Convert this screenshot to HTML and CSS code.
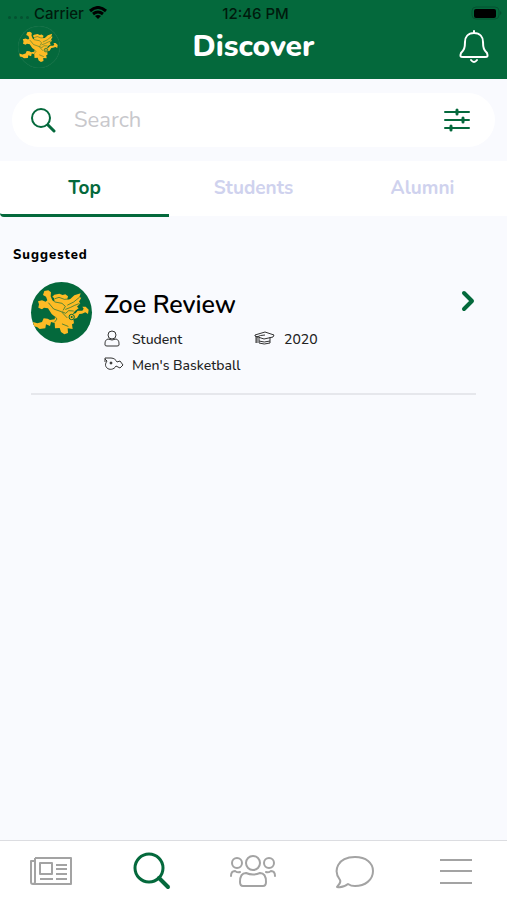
FILE: index.html
```html
<!DOCTYPE html>
<html lang="en">
<head>
    <meta charset="UTF-8">
    <meta name="viewport" content="width=device-width, initial-scale=1.0">
    <title>Discover</title>
    <link rel="stylesheet" href="styles.css">
</head>
<body>
    <!-- shared artwork -->
    <svg class="defs" aria-hidden="true">
        <symbol id="gryphon" viewBox="20 12 183 183">
            <path fill="#fdbb25" d="M60 39L72 37L80 43L79 55L84 67L91 72L89 60L84 56L90 50L105 47L115 51L123 49L131 55L129 64L137 64L150 52L169 46L165 58L171 59L164 71L168 76L158 86L163 91L152 99L145 108L154 106L160 98L174 98L178 92L174 86L184 86L193 95L191 108L183 103L173 107L165 108L158 120L147 123L149 136L143 139L145 153L130 151L131 165L120 169L110 162L106 150L92 151L91 135L80 132L77 144L65 139L63 151L46 153L38 147L28 145L26 132L39 136L53 132L58 121L70 122L77 126L91 124L92 116L82 108L71 91L59 89L53 94L42 89L44 79L41 70L53 67L64 71L69 67L65 56L56 51Z"/>
            <path fill="none" stroke="#04693c" stroke-width="2" stroke-linecap="round" stroke-linejoin="round" d="M73 75L88 93L111 101L128 119M92 72L113 76L123 85L117 96M92 62L104 58L120 64L133 63M130 81L148 72L164 59M124 94L139 88L151 82L164 77M113 101L124 106L133 98L147 99M92 116L98 123L91 132M114 138L131 145"/>
            <circle cx="142" cy="117" r="8" fill="#fdbb25" stroke="#04693c" stroke-width="3"/>
            <circle cx="142" cy="117" r="3" fill="#04693c"/>
        </symbol>
    </svg>

    <header>
        <div class="status-bar">
            <div class="carrier">
                <span class="signal"><i></i><i></i><i></i><i></i></span>
                <span>Carrier</span>
                <svg width="18" height="14" viewBox="0 0 18 14" fill="none" stroke="#000" stroke-width="3">
                    <path d="M1 5Q9-2 17 5M4 8Q9 4 14 8"/>
                    <path d="M6 10Q9 8 12 10L9 13Z" fill="#000" stroke="none"/>
                </svg>
            </div>
            <span class="time">12:46 PM</span>
            <svg class="battery" width="32" height="14" viewBox="0 0 32 14">
                <rect x="1" y="1" width="27" height="12" rx="4" fill="none" stroke="#045231"/>
                <rect x="3" y="3" width="22" height="9" rx="2"/>
                <path d="M29 5Q32 7 29 9Z" fill="#045231"/>
            </svg>
        </div>
        <div class="title-bar">
            <a href="#" class="logo" aria-label="Profile"><svg width="42" height="42"><use href="#gryphon"/></svg></a>
            <h1>Discover</h1>
            <button class="bell" aria-label="Notifications">
                <svg width="30" height="34" viewBox="0 0 30 34" fill="none" stroke="#fff" stroke-width="2" stroke-linecap="round" stroke-linejoin="round">
                    <path d="M15 3V1M15 3C9 3 6 7 6 12C6 18 5 20 2 23C1 26 1 27 4 27H26C29 27 29 26 28 23C25 20 24 18 24 12C24 7 21 3 15 3ZM12 30Q15 34 18 30"/>
                </svg>
            </button>
        </div>
    </header>

    <main>
        <form class="search">
            <label for="search" aria-label="Search">
                <svg width="26" height="26" viewBox="0 0 26 26" fill="none" stroke="#04693c" stroke-width="2" stroke-linecap="round">
                    <circle cx="11" cy="11" r="9"/>
                    <path d="M18 18L24 24" stroke-width="3"/>
                </svg>
            </label>
            <input type="text" id="search" placeholder="Search">
            <button type="button" aria-label="Filters">
                <svg width="28" height="26" viewBox="0 0 28 26" fill="none" stroke="#04693c" stroke-width="2" stroke-linecap="round">
                    <path d="M2 5H26M2 13H26M2 21H26"/>
                    <path d="M14 3V7M20 11V15M8 19V23" stroke-width="3"/>
                </svg>
            </button>
        </form>

        <nav class="tabs">
            <a href="#" class="active">Top</a>
            <a href="#">Students</a>
            <a href="#">Alumni</a>
        </nav>

        <section class="suggested">
            <h2>Suggested</h2>
            <article class="person">
                <svg class="avatar" width="61" height="61"><use href="#gryphon"/></svg>
                <div class="info">
                    <h3>Zoe Review</h3>
                    <ul>
                        <li>
                            <svg width="20" height="20" viewBox="0 0 20 20" fill="none" stroke="#333">
                                <circle cx="8" cy="6" r="4"/>
                                <path d="M4 10C1 11 1 13 1 16Q1 17 3 17H13Q15 17 15 16C15 13 15 11 12 10Q8 12 4 10Z"/>
                            </svg>
                            Student
                        </li>
                        <li>
                            <svg width="22" height="20" viewBox="0 0 22 20" fill="none" stroke="#333" stroke-linejoin="round">
                                <path d="M1 6L11 3L20 6L19 8L10 10L1 7ZM5 9V14Q10 16 16 14V8M5 12Q10 14 16 12M2 7V14M3 7V14M3 8Q6 6 11 6"/>
                            </svg>
                            2020
                        </li>
                        <li>
                            <svg width="20" height="20" viewBox="0 0 20 20" fill="none" stroke="#333" stroke-linejoin="round">
                                <path d="M1 7V3H7C10 3 12 5 13 7L16 6L19 10L16 13L12 11C10 15 5 15 3 13C1 11 1 9 3 6L1 4"/>
                                <circle cx="7" cy="8" r="1" fill="#333"/>
                            </svg>
                            Men's Basketball
                        </li>
                    </ul>
                </div>
                <a href="#" class="open" aria-label="Open profile">
                    <svg width="16" height="24" viewBox="0 0 16 24" fill="none" stroke="#04693c" stroke-width="4" stroke-linecap="round" stroke-linejoin="round">
                        <path d="M4 4L12 12L4 20"/>
                    </svg>
                </a>
            </article>
        </section>
    </main>

    <nav class="bottom-nav">
        <a href="#" aria-label="News">
            <svg width="44" height="40" viewBox="0 0 44 40" fill="none" stroke="#a3a3a3" stroke-width="2" stroke-linejoin="round">
                <path d="M6 7H42V33H4Q2 33 2 31V10H6M6 7V31Q6 33 4 33M11 12H23V23H11ZM27 14H38M27 18H38M27 23H38M11 28H24M27 28H38"/>
            </svg>
        </a>
        <a href="#" aria-label="Discover">
            <svg width="40" height="40" viewBox="0 0 40 40" fill="none" stroke="#04693c" stroke-width="3" stroke-linecap="round">
                <circle cx="17" cy="17" r="14"/>
                <path d="M27 27L36 36" stroke-width="4"/>
            </svg>
        </a>
        <a href="#" aria-label="Groups">
            <svg width="48" height="40" viewBox="0 0 48 40" fill="none" stroke="#a3a3a3" stroke-width="2" stroke-linecap="round">
                <circle cx="24" cy="12" r="7"/>
                <circle cx="8" cy="12" r="5"/>
                <circle cx="40" cy="12" r="5"/>
                <path d="M17 22Q24 25 31 22C36 22 37 26 37 31Q37 35 34 35H14Q11 35 11 31C11 26 12 22 17 22ZM2 25Q2 20 6 20Q9 22 11 21M46 25Q46 20 42 20Q39 22 37 21"/>
            </svg>
        </a>
        <a href="#" aria-label="Messages">
            <svg width="40" height="40" viewBox="0 0 40 40" fill="none" stroke="#a3a3a3" stroke-width="2" stroke-linejoin="round">
                <path d="M2 36C5 33 6 31 5 29C-2 20 2 6 20 6C31 6 38 12 38 20C38 29 30 35 20 35Q16 35 13 33Q8 37 2 36Z"/>
            </svg>
        </a>
        <a href="#" aria-label="Menu">
            <svg width="34" height="40" viewBox="0 0 34 40" stroke="#a3a3a3" stroke-width="2">
                <path d="M1 9H33M1 20H33M1 32H33"/>
            </svg>
        </a>
    </nav>
</body>
</html>
```
FILE: styles.css
```css
* {
    box-sizing: border-box;
}
body {
    font-family: Nunito, Lato, sans-serif;
    margin: 0;
    min-height: 100vh;
    display: flex;
    flex-direction: column;
    background-color: #f9fafe;
    color: #000;
}
h1, h2, h3, ul {
    margin: 0;
    padding: 0;
}
a {
    text-decoration: none;
}
button {
    background: none;
    border: none;
    padding: 0;
    cursor: pointer;
}
svg {
    display: block;
}
.defs {
    position: absolute;
    width: 0;
    height: 0;
}
header {
    background-color: #04693c;
    padding-bottom: 11px;
}
.status-bar {
    display: grid;
    grid-template-columns: 1fr auto 1fr;
    align-items: center;
    height: 26px;
    padding: 0 4px 0 8px;
    font-family: Inter, sans-serif;
    font-size: 15px;
    font-weight: 500;
    color: #001b0d;
}
.carrier {
    display: flex;
    align-items: center;
    gap: 5px;
}
.signal {
    display: flex;
    gap: 3px;
    padding-top: 8px;
}
.signal i {
    width: 3px;
    height: 3px;
    border-radius: 50%;
    background-color: #045231;
}
.battery {
    justify-self: end;
}
.title-bar {
    display: grid;
    grid-template-columns: 42px 1fr 42px;
    align-items: center;
    padding: 0 12px 0 18px;
}
.logo {
    border-radius: 50%;
    box-shadow: inset 0 0 1px #4d8f6c;
}
h1 {
    padding-right: 6px;
    color: #fff;
    font-size: 30px;
    line-height: 42px;
    font-weight: 800;
    text-align: center;
}
.bell {
    justify-self: center;
}
main {
    flex: 1;
}
.search {
    display: flex;
    align-items: center;
    gap: 16px;
    margin: 14px 12px;
    padding: 0 24px 0 18px;
    height: 54px;
    border-radius: 27px;
    background-color: #fff;
}
.search input {
    flex: 1;
    min-width: 0;
    border: none;
    outline: none;
    background: none;
    font-family: inherit;
    font-size: 22px;
}
.search input::placeholder {
    color: #c8c8cc;
}
.tabs {
    display: grid;
    grid-template-columns: repeat(3, 1fr);
    height: 55px;
    background-color: #fff;
}
.tabs a {
    border-bottom: 3px solid transparent;
    color: #cfd2ee;
    font-size: 19px;
    font-weight: 700;
    line-height: 52px;
    padding-top: 1px;
    text-align: center;
}
.tabs .active {
    border-color: #04693c;
    border-bottom-left-radius: 4px;
    color: #04693c;
}
.suggested {
    padding: 30px 13px;
}
h2 {
    font-size: 13px;
    line-height: 18px;
    font-weight: 800;
    letter-spacing: 1px;
}
.person {
    display: flex;
    gap: 12px;
    margin: 18px 18px 0;
    padding-bottom: 15px;
    border-bottom: 2px solid #e6e7ec;
}
.avatar {
    flex-shrink: 0;
    border-radius: 50%;
    background-color: #04693c;
}
.info {
    flex: 1;
}
h3 {
    padding-top: 2px;
    font-size: 25px;
    line-height: 42px;
    font-weight: 600;
}
.info ul {
    display: grid;
    grid-template-columns: 150px 1fr;
    list-style: none;
}
.info li {
    display: flex;
    align-items: center;
    gap: 8px;
    height: 26px;
    font-size: 14px;
    font-weight: 500;
    color: #222;
    white-space: nowrap;
}
.open {
    margin-top: 7px;
}
.bottom-nav {
    display: grid;
    grid-template-columns: repeat(5, 1fr);
    height: 60px;
    border-top: 1px solid #dcdde1;
    background-color: #fff;
}
.bottom-nav a {
    display: flex;
    align-items: center;
    justify-content: center;
}
```
